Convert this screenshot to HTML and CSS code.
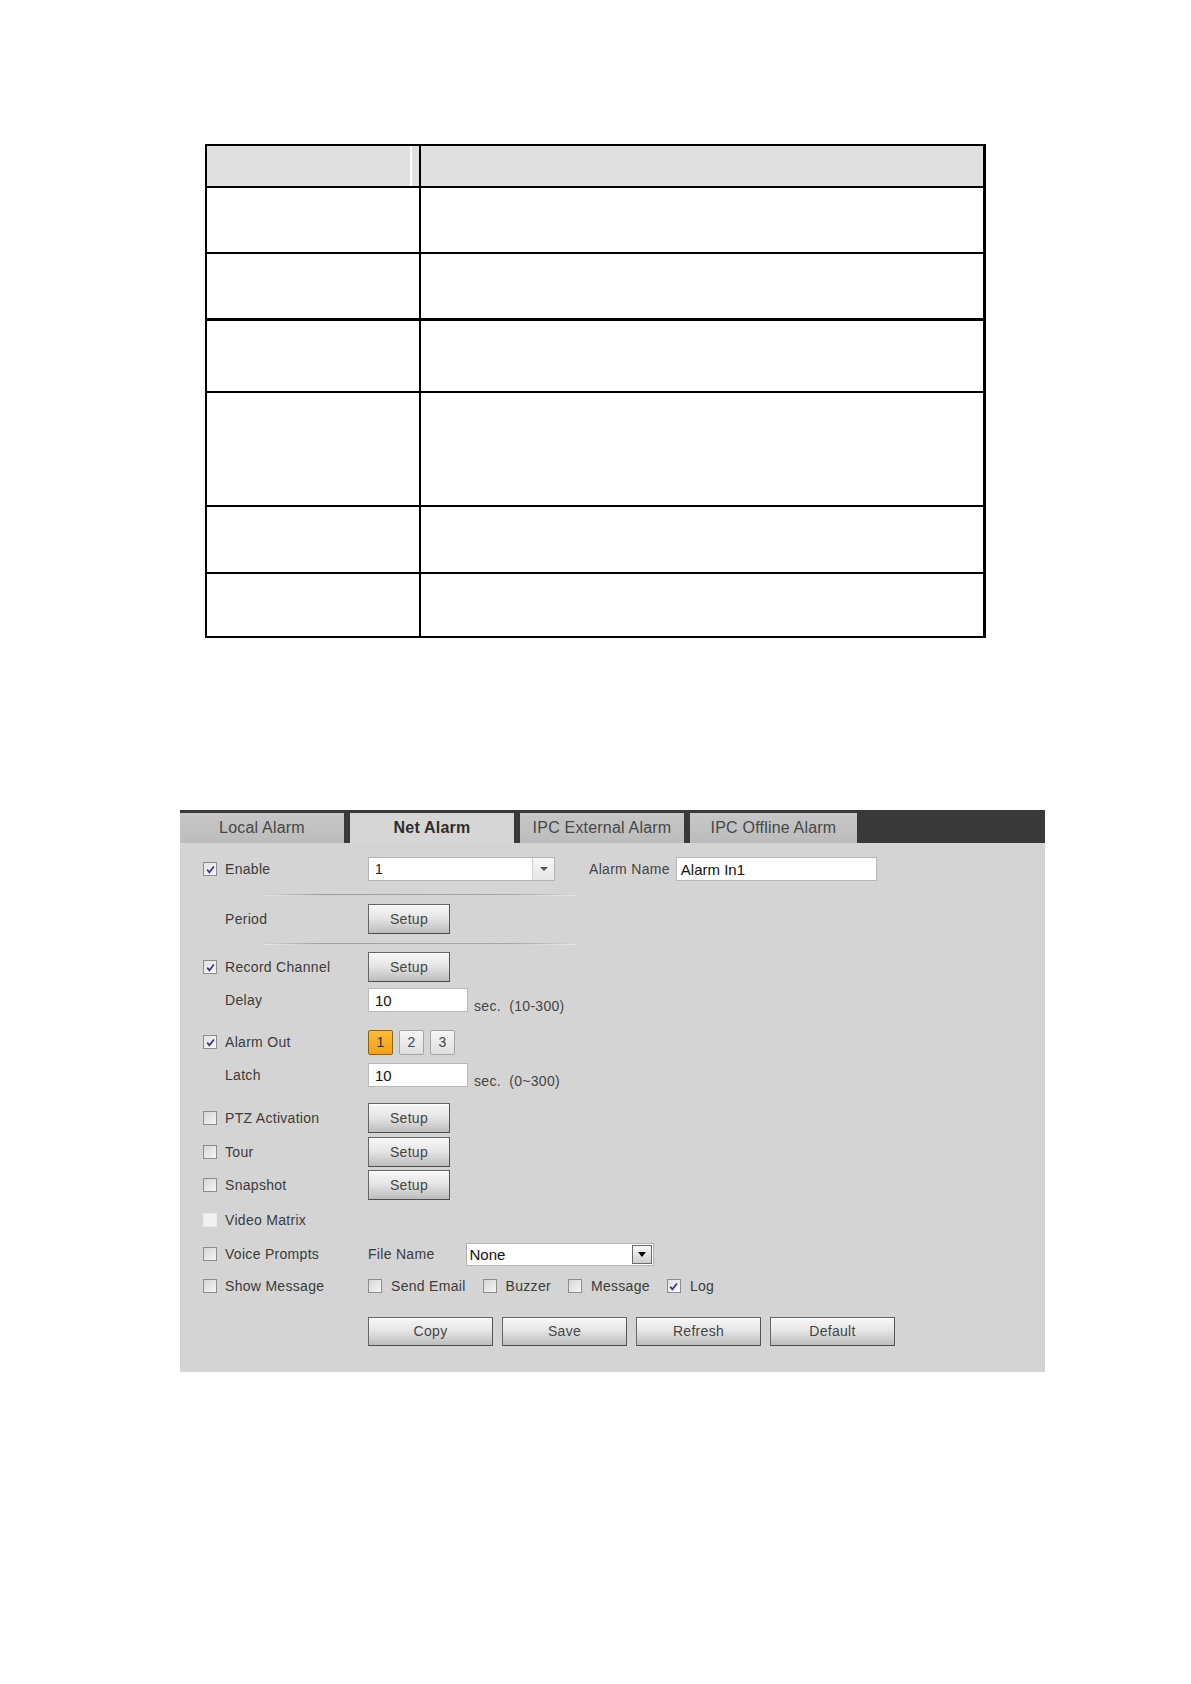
FILE: index.html
```html
<!DOCTYPE html>
<html>
<head>
<meta charset="utf-8">
<title>Net Alarm</title>
<link rel="stylesheet" href="styles.css">
</head>
<body>
<div class="page">
  <div class="doc-table">
    <div class="trow thead"><div class="ca"></div><div class="cbx"></div></div>
    <div class="trow h64"><div class="ca"></div><div class="cbx"></div></div>
    <div class="trow h64"><div class="ca"></div><div class="cbx"></div></div>
    <div class="trow h70 thick"><div class="ca"></div><div class="cbx"></div></div>
    <div class="trow h112"><div class="ca"></div><div class="cbx"></div></div>
    <div class="trow h65"><div class="ca"></div><div class="cbx"></div></div>
    <div class="trow h62"><div class="ca"></div><div class="cbx"></div></div>
  </div>

  <div class="panel">
    <div class="tabbar">
      <div class="tab">Local Alarm</div>
      <div class="tab active">Net Alarm</div>
      <div class="tab">IPC External Alarm</div>
      <div class="tab wide">IPC Offline Alarm</div>
    </div>

    <div class="form">
      <div class="row r-enable">
        <div class="lab"><span class="chk on"><svg viewBox="0 0 11 11" width="11" height="11"><path d="M2.2 5.6 L4.4 8.3 L8.9 2.4" fill="none" stroke="#34349a" stroke-width="1.7"/></svg></span><span>Enable</span></div>
        <div class="select sel-ch"><span class="val">1</span><span class="arr light"><i class="tri grey"></i></span></div>
        <span class="aname">Alarm Name</span>
        <div class="input name-in">Alarm In1</div>
      </div>
      <div class="sep s1"></div>
      <div class="row r-period">
        <div class="lab"><span class="chk hidden"></span><span>Period</span></div>
        <div class="btn setup">Setup</div>
      </div>
      <div class="sep s2"></div>
      <div class="row r-record">
        <div class="lab"><span class="chk on"><svg viewBox="0 0 11 11" width="11" height="11"><path d="M2.2 5.6 L4.4 8.3 L8.9 2.4" fill="none" stroke="#34349a" stroke-width="1.7"/></svg></span><span>Record Channel</span></div>
        <div class="btn setup">Setup</div>
      </div>
      <div class="row r-delay">
        <div class="lab"><span class="chk hidden"></span><span>Delay</span></div>
        <div class="input num-in">10</div>
        <span class="sec">sec.&nbsp;&nbsp;(10-300)</span>
      </div>
      <div class="row r-aout">
        <div class="lab"><span class="chk on"><svg viewBox="0 0 11 11" width="11" height="11"><path d="M2.2 5.6 L4.4 8.3 L8.9 2.4" fill="none" stroke="#34349a" stroke-width="1.7"/></svg></span><span>Alarm Out</span></div>
        <div class="outs">
          <div class="obtn sel">1</div>
          <div class="obtn">2</div>
          <div class="obtn">3</div>
        </div>
      </div>
      <div class="row r-latch">
        <div class="lab"><span class="chk hidden"></span><span>Latch</span></div>
        <div class="input num-in">10</div>
        <span class="sec">sec.&nbsp;&nbsp;(0~300)</span>
      </div>
      <div class="row r-ptz">
        <div class="lab"><span class="chk"></span><span>PTZ Activation</span></div>
        <div class="btn setup">Setup</div>
      </div>
      <div class="row r-tour">
        <div class="lab"><span class="chk"></span><span>Tour</span></div>
        <div class="btn setup">Setup</div>
      </div>
      <div class="row r-snap">
        <div class="lab"><span class="chk"></span><span>Snapshot</span></div>
        <div class="btn setup">Setup</div>
      </div>
      <div class="row r-matrix">
        <div class="lab"><span class="chk dis"></span><span>Video Matrix</span></div>
      </div>
      <div class="row r-voice">
        <div class="lab"><span class="chk"></span><span>Voice Prompts</span></div>
        <span class="fname">File Name</span>
        <div class="select sel-file"><span class="val big">None</span><span class="arr boxed"><i class="tri black"></i></span></div>
      </div>
      <div class="row r-show">
        <div class="lab"><span class="chk"></span><span>Show Message</span></div>
        <div class="opts">
          <div class="opt"><span class="chk"></span><span>Send Email</span></div>
          <div class="opt"><span class="chk"></span><span>Buzzer</span></div>
          <div class="opt"><span class="chk"></span><span>Message</span></div>
          <div class="opt"><span class="chk on"><svg viewBox="0 0 11 11" width="11" height="11"><path d="M2.2 5.6 L4.4 8.3 L8.9 2.4" fill="none" stroke="#34349a" stroke-width="1.7"/></svg></span><span>Log</span></div>
        </div>
      </div>
      <div class="row r-actions">
        <div class="btn act">Copy</div>
        <div class="btn act">Save</div>
        <div class="btn act">Refresh</div>
        <div class="btn act">Default</div>
      </div>
    </div>
  </div>
</div>
</body>
</html>
```

FILE: styles.css
```css
* { box-sizing: border-box; }
html, body { margin: 0; padding: 0; background: #fff; }
body { font-family: "Liberation Sans", Arial, sans-serif; }

.page { width: 1191px; min-height: 1684px; padding-top: 144px; }

/* document table */
.doc-table {
  margin-left: 205px;
  width: 781px;
  border: 2px solid #000;
  border-right-width: 3px;
}
.trow { display: flex; border-top: 2px solid #000; }
.trow.thead { border-top: none; height: 40px; }
.trow.thick { border-top-width: 3px; }
.h64 { height: 66px; }
.h70 { height: 73px; }
.h112 { height: 114px; }
.h65 { height: 67px; }
.h62 { height: 64px; }
.ca { width: 214px; border-right: 2px solid #000; }
.cbx { flex: 1; }
.thead .ca { background: linear-gradient(to right, #e0e0e0 0 203px, #fff 203px 205px, #e0e0e0 205px); }
.thead .cbx { background: #e0e0e0; }

/* panel */
.panel {
  margin-top: 172px;
  margin-left: 180px;
  width: 865px;
  background: #d4d4d4;
  padding-bottom: 26px;
}
.tabbar {
  display: flex;
  gap: 6px;
  height: 33px;
  padding-top: 3px;
  background: #393939;
}
.tab {
  width: 164px;
  height: 30px;
  background: linear-gradient(#c6c6c6, #bcbcbc);
  color: #474747;
  font-size: 16px;
  display: flex;
  align-items: center;
  justify-content: center;
  letter-spacing: 0.2px;
}
.tab.wide { width: 167px; }
.tab.active { background: #d6d6d6; color: #2e2e2e; font-weight: bold; }

.form { padding-left: 23px; }
.row { display: flex; align-items: center; height: 26px; font-size: 14px; color: #3b3b3b; letter-spacing: 0.3px; }
.lab { width: 165px; display: flex; align-items: center; gap: 8px; }

.chk {
  width: 14px; height: 14px;
  border: 1px solid #8c8c8c;
  background: linear-gradient(135deg, #d6d6d6, #f6f6f6);
  display: inline-flex; align-items: center; justify-content: center;
  flex: none;
}
.chk.on { background: linear-gradient(135deg, #e0e0e0, #fafafa); }
.chk.hidden { visibility: hidden; }
.chk.dis { border-color: #ebebeb; background: #f1f1f1; }

.sep {
  margin-left: 60px;
  width: 313px;
  height: 2px;
  background: linear-gradient(to right, rgba(160,160,160,0), #a0a0a0 18%, #a8a8a8 80%, rgba(190,190,190,0));
  border-bottom: 1px solid rgba(240,240,240,0.6);
}
.s1 { margin-top: 12px; }
.s2 { margin-top: 9px; }

.r-enable { margin-top: 13px; }
.r-period { margin-top: 8px; height: 30px; }
.r-record { margin-top: 7px; height: 30px; }
.r-delay { margin-top: 5px; }
.r-aout { margin-top: 16px; }
.r-latch { margin-top: 7px; }
.r-ptz { margin-top: 15px; height: 30px; }
.r-tour { margin-top: 4px; height: 30px; }
.r-snap { margin-top: 3px; height: 30px; }
.r-matrix { margin-top: 7px; }
.r-voice { margin-top: 8px; }
.r-show { margin-top: 6px; }
.r-actions { margin-top: 17px; height: 30px; padding-left: 165px; gap: 9px; }

.select {
  display: flex; align-items: stretch;
  background: #fff;
  border: 1px solid #b4b4b4;
  height: 24px;
}
.sel-ch { width: 187px; }
.sel-file { width: 188px; height: 23px; margin-left: 31px; }
.val { flex: 1; padding-left: 6px; display: flex; align-items: center; color: #222; font-size: 14px; }
.val.big { font-size: 15px; padding-left: 3px; color: #111; letter-spacing: 0; }
.arr { width: 22px; display: flex; align-items: center; justify-content: center; }
.arr.light { background: linear-gradient(#f7f7f7, #e6e6e6); border-left: 1px solid #d0d0d0; }
.arr.boxed { width: 20px; margin: 1px; border: 1px solid #6a6a6a; background: linear-gradient(#fafafa, #cfcfcf); }
.tri { width: 0; height: 0; border-left: 4px solid transparent; border-right: 4px solid transparent; }
.tri.grey { border-top: 4px solid #555; }
.tri.black { border-top: 5px solid #000; }

.aname { margin-left: 34px; color: #444; }
.input {
  background: #fff;
  border: 1px solid #b8b8b8;
  height: 24px;
  display: flex; align-items: center;
  color: #111;
  letter-spacing: 0;
}
.name-in { width: 201px; margin-left: 6px; padding-left: 4px; font-size: 15px; }
.num-in { width: 100px; padding-left: 6px; font-size: 15px; }
.sec { align-self: flex-end; margin-left: 6px; color: #444; font-size: 14px; line-height: 16px; margin-bottom: -1px; }

.btn {
  display: flex; align-items: center; justify-content: center;
  height: 30px;
  border: 1px solid #666;
  border-bottom-color: #4c4c4c;
  border-right-color: #555;
  background: linear-gradient(#f8f8f8 0%, #e6e6e6 45%, #bdbdbd 100%);
  color: #454545;
  font-size: 14px;
  box-shadow: inset 0 1px 0 #fff;
}
.setup { width: 82px; }
.act { width: 125px; height: 29px; }

.outs { display: flex; gap: 6px; }
.obtn {
  width: 25px; height: 25px;
  border: 1px solid #a5a5a5;
  border-radius: 2px;
  background: linear-gradient(#f6f6f6, #dedede);
  display: flex; align-items: center; justify-content: center;
  color: #444; font-size: 14px;
}
.obtn.sel { border-color: #8d6410; background: linear-gradient(#fdbb3a, #f4a015); color: #333; }

.fname { color: #3b3b3b; }
.opts { display: flex; gap: 17px; }
.opt { display: flex; align-items: center; gap: 9px; }
```
